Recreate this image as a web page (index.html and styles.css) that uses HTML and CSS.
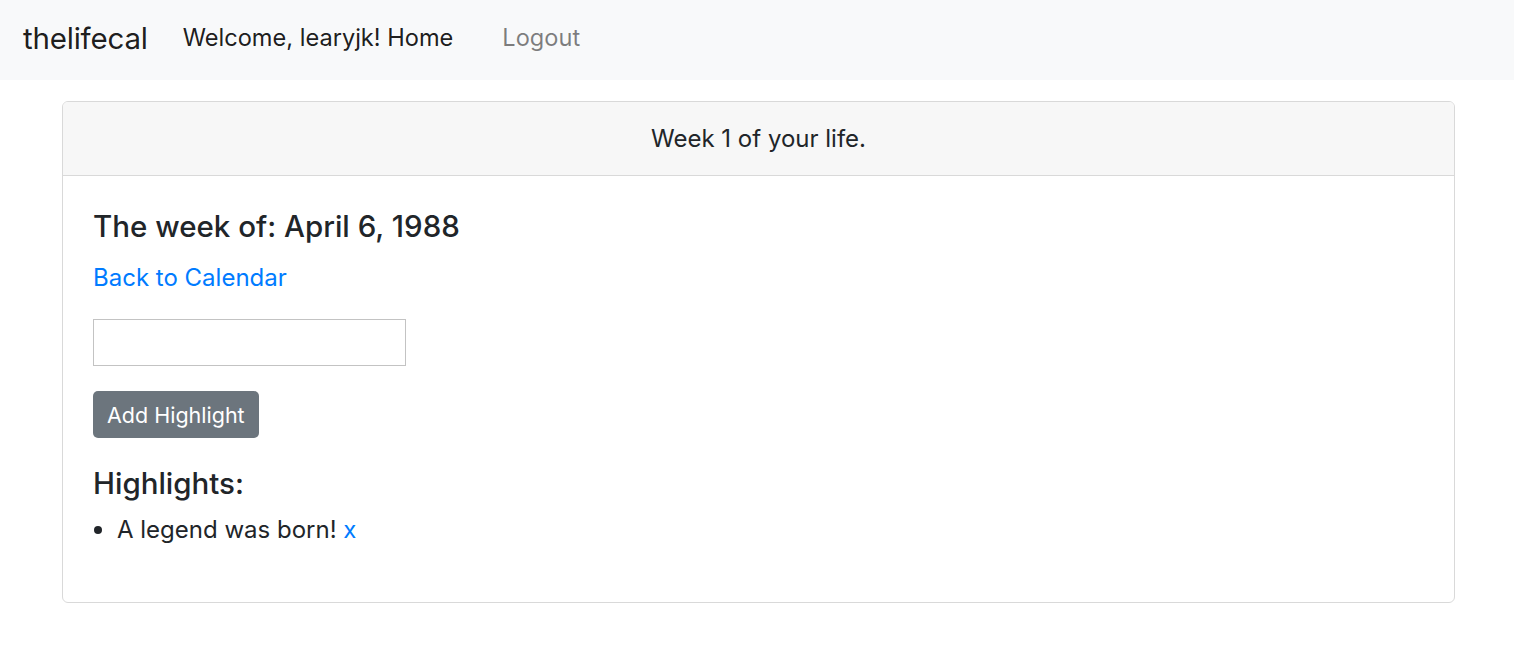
FILE: index.html
```html
<!DOCTYPE html>
<html lang="en">
<head>
<meta charset="utf-8">
<title>thelifecal</title>
<link rel="stylesheet" href="styles.css">
</head>
<body>
<nav class="navbar">
  <a class="brand" href="#">thelifecal</a>
  <span class="nav-text">Welcome, learyjk! Home</span>
  <a class="nav-link" href="#">Logout</a>
</nav>
<main class="container">
  <section class="card">
    <header class="card-header">Week 1 of your life.</header>
    <div class="card-body">
      <h5 class="card-title">The week of: April 6, 1988</h5>
      <p class="back"><a href="#">Back to Calendar</a></p>
      <form class="hl-form">
        <input type="text" class="hl-input">
        <button type="button" class="btn">Add Highlight</button>
      </form>
      <h5 class="hl-title">Highlights:</h5>
      <ul class="hl-list">
        <li>A legend was born! <a href="#">x</a></li>
      </ul>
    </div>
  </section>
</main>
</body>
</html>
```
FILE: styles.css
```css
* { box-sizing: border-box; }
html, body { margin: 0; padding: 0; }
body {
  font-family: Inter, "Noto Sans", "Liberation Sans", sans-serif;
  font-size: 24px;
  line-height: 36px;
  color: #212529;
  background: #fff;
}
a { color: #007bff; text-decoration: none; }

.navbar {
  display: flex;
  align-items: center;
  height: 80px;
  padding: 0 24px 4px 23px;
  background: #f8f9fa;
}
.brand {
  font-size: 29.5px;
  color: rgba(0,0,0,.9);
  margin-right: 35px;
  letter-spacing: -0.2px;
}
.nav-text {
  color: rgba(0,0,0,.9);
  margin-right: 49px;
  font-size: 23.6px;
}
.nav-link { color: rgba(0,0,0,.5); font-size: 23.6px; }

.container {
  padding: 21px 59px 0 62px;
}
.card {
  border: 1px solid #d9d9d9;
  border-radius: 6px;
  overflow: hidden;
}
.card-header {
  background: #f7f7f7;
  border-bottom: 1px solid #d9d9d9;
  text-align: center;
  padding: 19px 0 18px;
}
.card-body { padding: 32px 30px 30px; }
.card-title {
  margin: 0 0 16px;
  font-size: 29.5px;
  line-height: 36px;
  font-weight: 500;
}
.back { margin: 0 0 25px; }
.hl-form { display: flex; flex-direction: column; align-items: flex-start; gap: 25px; }
.hl-input {
  width: 313px;
  height: 47px;
  border: 1px solid #c3c3c3;
  border-radius: 0;
  margin-top: -2px;
}
.btn {
  height: 47px;
  padding: 0 14px;
  background: #6c757d;
  color: #fff;
  border: none;
  border-radius: 5px;
  font-family: inherit;
  font-size: 21.5px;
}
.hl-title {
  margin: 27px 0 10px;
  font-size: 29.5px;
  line-height: 36px;
  font-weight: 500;
}
.hl-list {
  margin: 0 0 24px;
  padding-left: 24px;
}
.hl-list li::marker { font-size: 26px; }
```
